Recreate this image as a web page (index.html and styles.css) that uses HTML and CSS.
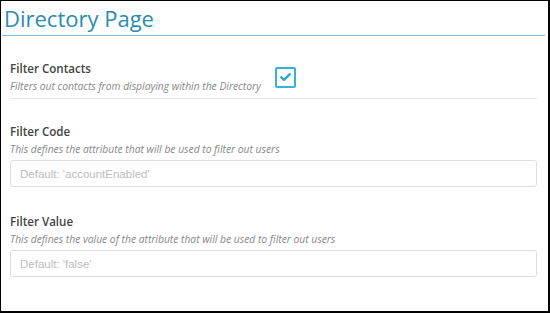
FILE: index.html
```html
<!DOCTYPE html>
<html lang="en">
<head>
    <meta charset="UTF-8">
    <title>Directory Page</title>
    <link rel="stylesheet" href="styles.css">
</head>
<body>
    <div class="frame">
        <h1 class="page-title">Directory Page</h1>
        <div class="settings">
            <div class="setting setting-toggle">
                <div class="setting-text">
                    <div class="setting-label">Filter Contacts</div>
                    <div class="setting-desc">Filters out contacts from displaying within the Directory</div>
                </div>
                <span class="checkbox">
                    <svg width="11" height="8" viewBox="0 0 11 8">
                        <path d="M1.2 4.2 L4 6.8 L9.8 1.2" fill="none" stroke="#2ea6d4" stroke-width="2.4" stroke-linecap="round" stroke-linejoin="round"/>
                    </svg>
                </span>
            </div>
            <div class="setting">
                <div class="setting-label">Filter Code</div>
                <div class="setting-desc">This defines the attribute that will be used to filter out users</div>
                <input class="setting-input" type="text" placeholder="Default: 'accountEnabled'">
            </div>
            <div class="setting">
                <div class="setting-label">Filter Value</div>
                <div class="setting-desc">This defines the value of the attribute that will be used to filter out users</div>
                <input class="setting-input" type="text" placeholder="Default: 'false'">
            </div>
        </div>
    </div>
</body>
</html>
```

FILE: styles.css
```css
body {
    margin: 0;
    padding: 0;
    background-color: #ffffff;
    font-family: 'Open Sans', 'Noto Sans', sans-serif;
}
.frame {
    width: 550px;
    height: 313px;
    box-sizing: border-box;
    border-style: solid;
    border-color: #000000;
    border-width: 1px 2px 2px 1px;
    overflow: hidden;
}
.page-title {
    margin: 0 3px 0 1px;
    padding: 2px 0 0 2px;
    height: 32px;
    border-bottom: 1px solid #80c4d8;
    font-size: 22px;
    font-weight: 400;
    line-height: 30px;
    color: #2a8db0;
}
.settings {
    padding: 0 11px 0 9px;
}
.setting {
    padding-top: 24px;
}
.setting-toggle {
    display: flex;
    align-items: center;
    padding-top: 24px;
    padding-bottom: 4px;
    border-bottom: 1px solid #e6e6e6;
}
.setting-text {
    width: 265px;
}
.setting-label {
    font-size: 11.6px;
    font-weight: 600;
    line-height: 18px;
    color: #444444;
}
.setting-desc {
    font-size: 10.3px;
    font-style: italic;
    line-height: 16px;
    color: #888888;
}
.checkbox {
    width: 21px;
    height: 21px;
    box-sizing: border-box;
    border: 2px solid #3ab0da;
    border-radius: 2px;
    display: flex;
    align-items: center;
    justify-content: center;
}
.setting-input {
    display: block;
    width: 100%;
    height: 27px;
    margin: 3px 0 2px;
    padding: 0 9px;
    box-sizing: border-box;
    border: 1px solid #dadfe4;
    border-radius: 3px;
    font-family: 'Liberation Sans', Arial, sans-serif;
    font-size: 11.5px;
    outline: none;
}
.setting-input::placeholder {
    color: #bdbdbd;
}
```
